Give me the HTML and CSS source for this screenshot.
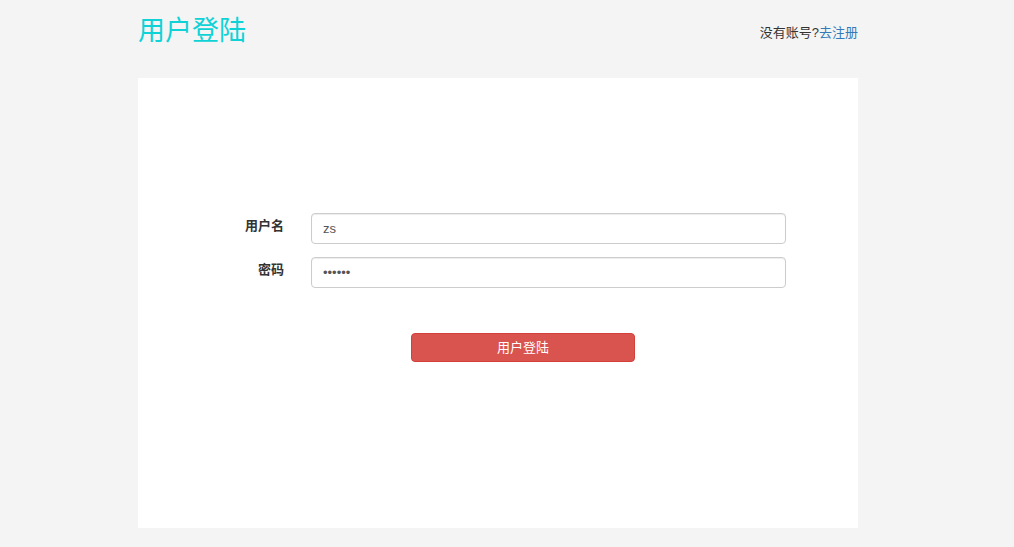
FILE: index.html
```html
<!DOCTYPE html>
<html lang="zh-CN">
<head>
  <meta charset="UTF-8">
  <title>用户登陆</title>
  <link rel="stylesheet" href="styles.css">
</head>
<body>
  <div class="container">
    <div class="header">
      <h1 class="title">用户登陆</h1>
      <div class="register">没有账号?<a href="#">去注册</a></div>
    </div>

    <div class="login-box">
      <form class="login-form">
        <div class="form-row">
          <label class="form-label" for="username">用户名</label>
          <input class="form-input" type="text" id="username" value="zs">
        </div>
        <div class="form-row">
          <label class="form-label" for="password">密码</label>
          <input class="form-input" type="password" id="password" value="123456">
        </div>
        <div class="form-actions">
          <button type="button" class="login-button">用户登陆</button>
        </div>
      </form>
    </div>
  </div>
</body>
</html>
```

FILE: styles.css
```css
html, body {
  margin: 0;
  padding: 0;
}

body {
  background-color: #f4f4f4;
  font-family: "Helvetica Neue", "Liberation Sans", Arial, "Noto Sans CJK SC", sans-serif;
  font-size: 13px;
  color: #333;
  padding-right: 18px; /* room the scrollbar took in the original */
}

.container {
  width: 720px;
  margin: 0 auto;
  padding-bottom: 19px;
}

.header {
  display: flex;
  justify-content: space-between;
  align-items: center;
  padding-top: 15px;
  height: 33px;
  margin-bottom: 30px;
}

.title {
  margin: 0;
  font-size: 27px;
  font-weight: normal;
  line-height: 33px;
  color: #0fd2d6;
}

.register {
  color: #333;
}

.register a {
  color: #337ab7;
  text-decoration: none;
}

.login-box {
  background-color: #ffffff;
  height: 450px;
  box-sizing: border-box;
  padding-top: 135px;
}

.form-row {
  display: flex;
  align-items: center;
  margin-bottom: 13px;
}

.form-label {
  width: 146px;
  text-align: right;
  font-weight: bold;
  margin-right: 27px;
  position: relative;
  top: -4px;
}

.form-input {
  width: 475px;
  height: 31px;
  box-sizing: border-box;
  padding: 6px 11px;
  border: 1px solid #ccc;
  border-radius: 4px;
  font-family: inherit;
  font-size: 13px;
  color: #555;
  box-shadow: inset 0 1px 1px rgba(0, 0, 0, 0.075);
}

.form-actions {
  padding-top: 32px;
  padding-left: 273px;
}

.login-button {
  width: 224px;
  height: 29px;
  padding: 0 0 3px;
  background-color: #d9534f;
  border: 1px solid #d43f3a;
  border-radius: 4px;
  color: #fff;
  font-family: inherit;
  font-size: 13px;
  cursor: pointer;
}
```
